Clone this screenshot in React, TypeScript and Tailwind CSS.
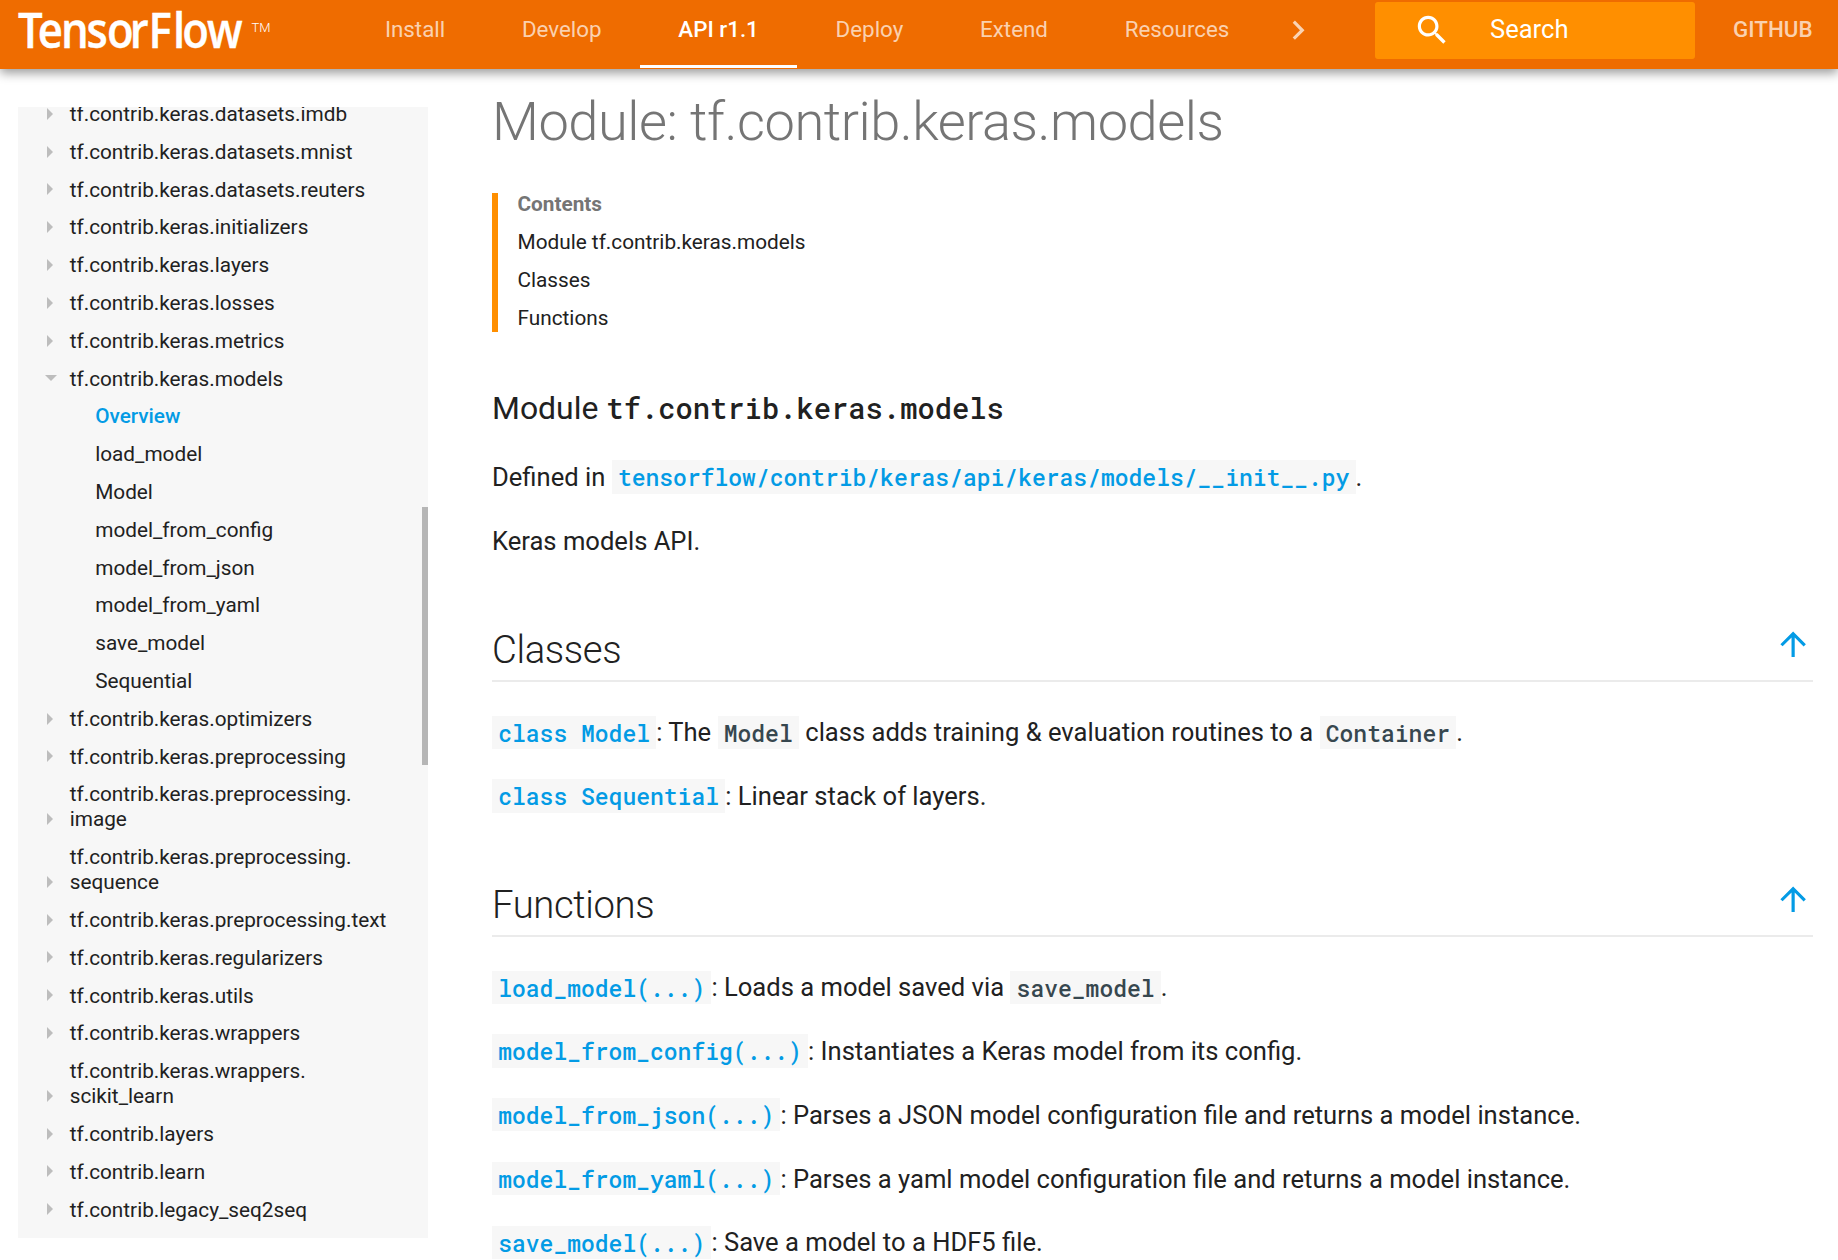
import React from 'react';

type NavRow = { lines: string[]; kind?: 'open' | 'child' | 'active' };

const SIDEBAR: NavRow[] = [
  { lines: ['tf.contrib.keras.datasets.imdb'] },
  { lines: ['tf.contrib.keras.datasets.mnist'] },
  { lines: ['tf.contrib.keras.datasets.reuters'] },
  { lines: ['tf.contrib.keras.initializers'] },
  { lines: ['tf.contrib.keras.layers'] },
  { lines: ['tf.contrib.keras.losses'] },
  { lines: ['tf.contrib.keras.metrics'] },
  { lines: ['tf.contrib.keras.models'], kind: 'open' },
  { lines: ['Overview'], kind: 'active' },
  { lines: ['load_model'], kind: 'child' },
  { lines: ['Model'], kind: 'child' },
  { lines: ['model_from_config'], kind: 'child' },
  { lines: ['model_from_json'], kind: 'child' },
  { lines: ['model_from_yaml'], kind: 'child' },
  { lines: ['save_model'], kind: 'child' },
  { lines: ['Sequential'], kind: 'child' },
  { lines: ['tf.contrib.keras.optimizers'] },
  { lines: ['tf.contrib.keras.preprocessing'] },
  { lines: ['tf.contrib.keras.preprocessing.', 'image'] },
  { lines: ['tf.contrib.keras.preprocessing.', 'sequence'] },
  { lines: ['tf.contrib.keras.preprocessing.text'] },
  { lines: ['tf.contrib.keras.regularizers'] },
  { lines: ['tf.contrib.keras.utils'] },
  { lines: ['tf.contrib.keras.wrappers'] },
  { lines: ['tf.contrib.keras.wrappers.', 'scikit_learn'] },
  { lines: ['tf.contrib.layers'] },
  { lines: ['tf.contrib.learn'] },
  { lines: ['tf.contrib.legacy_seq2seq'] },
];

const TABS = ['Install', 'Develop', 'API r1.1', 'Deploy', 'Extend', 'Resources'];

const FUNCTIONS: { name: string; text: React.ReactNode }[] = [
  { name: 'load_model(...)', text: <>: Loads a model saved via <Code>save_model</Code>.</> },
  { name: 'model_from_config(...)', text: ': Instantiates a Keras model from its config.' },
  { name: 'model_from_json(...)', text: ': Parses a JSON model configuration file and returns a model instance.' },
  { name: 'model_from_yaml(...)', text: ': Parses a yaml model configuration file and returns a model instance.' },
  { name: 'save_model(...)', text: ': Save a model to a HDF5 file.' },
];

function Code({ children, link = false }: { children: React.ReactNode; link?: boolean }) {
  return (
    <code
      className={`bg-[#f7f7f7] px-[6.2px] py-[1.6px] font-['Roboto_Mono','DejaVu_Sans_Mono',monospace] text-[23px] font-medium ${
        link ? 'text-[#039be5]' : 'text-[#37474f]'
      }`}
    >
      {children}
    </code>
  );
}

function Logo() {
  return (
    <svg width="260" height="69" viewBox="0 0 260 69" className="ml-[18px] shrink-0 overflow-visible" fill="#fff">
      <g transform="scale(0.91 1)">
        <text
          y="48"
          x="0 21.6 47.3 75.4 97.7 122.9 143.4 170.4 180.5 207.6"
          fontFamily="'Open Sans', sans-serif"
          fontWeight="600"
          fontSize="48"
          stroke="#fff"
          strokeWidth="0.4"
        >
          TensorFlow
        </text>
      </g>
      <text x="233.5" y="31.8" fontFamily="Roboto, sans-serif" fontWeight="300" fontSize="13">
        TM
      </text>
    </svg>
  );
}

function Header() {
  return (
    <header className="relative z-10 flex h-[69px] bg-[#ef6c00] text-[22.35px] text-white shadow-[0_4px_10px_rgba(0,0,0,0.4)]">
      <Logo />
      <nav className="ml-[68.5px] flex h-[68px]">
        {TABS.map((tab) => (
          <a
            key={tab}
            className={`border-b-[3px] px-[38.4px] pt-[10px] leading-[38px] ${
              tab === 'API r1.1' ? 'border-white font-medium' : 'border-transparent text-white/70'
            }`}
          >
            {tab}
          </a>
        ))}
      </nav>
      <svg className="mt-[11px] ml-[11px] h-[38.25px] w-[38.25px] shrink-0 fill-white/70" viewBox="0 0 24 24">
        <path d="M10 6L8.59 7.41 13.17 12l-4.58 4.59L10 18l6-6z" />
      </svg>
      <div className="absolute top-[2px] right-[143px] flex h-[57px] w-[320px] items-center rounded-[3px] bg-[#ff8f00] pl-[38.25px] text-[25.55px]">
        <svg className="-mt-[1px] h-[38.25px] w-[38.25px] fill-white" viewBox="0 0 24 24">
          <path d="M15.5 14h-.79l-.28-.27C15.41 12.59 16 11.11 16 9.5 16 5.91 13.09 3 9.5 3S3 5.91 3 9.5 5.91 16 9.5 16c1.61 0 3.09-.59 4.23-1.57l.27.28v.79l5 4.99L20.49 19l-4.99-5zm-6 0C7.01 14 5 11.99 5 9.5S7.01 5 9.5 5 14 7.01 14 9.5 11.99 14 9.5 14z" />
        </svg>
        <span className="-mt-[2px] ml-[38.5px]">Search</span>
      </div>
      <a className="mr-[25.5px] ml-auto pt-[10px] leading-[38px] font-medium text-white/70">GITHUB</a>
    </header>
  );
}

function Sidebar() {
  return (
    <aside className="relative ml-[18px] h-[1131px] w-[410px] shrink-0 overflow-hidden bg-[#f7f7f7] text-[20.75px] leading-[25px]">
      <ul className="-mt-[5px]">
        {SIDEBAR.map((row, i) => {
          const top = !row.kind || row.kind === 'open';
          return (
            <li key={i} className={`flex items-end pb-[12.8px] ${top ? '' : 'pl-[25.5px]'}`}>
              <span className="flex h-[25px] w-[51.7px] shrink-0 items-center pb-[1.5px]">
                {!row.kind && (
                  <svg className="ml-[29px] h-3 w-1.5 fill-[#bdbdbd]" viewBox="0 0 6 12">
                    <path d="M0 0l6 6-6 6z" />
                  </svg>
                )}
                {row.kind === 'open' && (
                  <svg className="ml-[26.5px] h-1.5 w-3 fill-[#bdbdbd]" viewBox="0 0 12 6">
                    <path d="M0 0h12L6 6z" />
                  </svg>
                )}
              </span>
              <span className={row.kind === 'active' ? 'font-medium text-[#039be5]' : ''}>
                {row.lines.map((l) => (
                  <span key={l} className="block">
                    {l}
                  </span>
                ))}
              </span>
            </li>
          );
        })}
      </ul>
      <div className="absolute top-[400px] right-0 h-[258px] w-[6px] bg-[#b6b6b6]" />
    </aside>
  );
}

function SectionTitle({ children }: { children: React.ReactNode }) {
  return (
    <div className="mt-[64px] mb-[31px] flex h-[58px] items-start justify-between border-b-2 border-[#ebebeb]">
      <h2 className="pt-[0.5px] text-[38.25px] leading-[51px] font-light tracking-[-0.01em]">{children}</h2>
      <svg className="mt-[0.5px] mr-[1px] h-[38.25px] w-[38.25px] fill-[#039be5]" viewBox="0 0 24 24">
        <path d="M4 12l1.41 1.41L11 7.83V20h2V7.83l5.58 5.59L20 12l-8-8-8 8z" />
      </svg>
    </div>
  );
}

export default function App() {
  return (
    <div className="flex h-[1260px] w-[1838px] flex-col overflow-hidden bg-white font-['Roboto',sans-serif] text-[#212121]">
      <Header />
      <div className="flex pt-[38px]">
        <Sidebar />
        <main className="-mt-[17px] ml-[64px] w-[1321px] text-[25.58px] leading-[38.25px]">
          <h1 className="text-[54.2px] leading-[63.75px] font-light tracking-[-0.0088em] text-[#757575]">
            Module: tf.contrib.keras.models
          </h1>
          <nav className="mt-[39.25px] flex h-[139px] border-l-[6px] border-[#ff8f00] pl-[19.5px] text-[20.77px] leading-[37.9px]">
            <ul className="-mt-[7px]">
              <li className="font-bold text-[#757575]">Contents</li>
              <li>Module tf.contrib.keras.models</li>
              <li>Classes</li>
              <li>Functions</li>
            </ul>
          </nav>
          <h3 className="mt-[51px] text-[31.95px] leading-[51px]">
            Module{' '}
            <code className="font-['Roboto_Mono','DejaVu_Sans_Mono',monospace] text-[28.8px] font-medium">
              tf.contrib.keras.models
            </code>
          </h3>
          <p className="mt-[24px]">
            Defined in <Code link>tensorflow/contrib/keras/api/keras/models/__init__.py</Code>.
          </p>
          <p className="mt-[25.75px]">Keras models API.</p>
          <SectionTitle>Classes</SectionTitle>
          <p>
            <Code link>class Model</Code>: The <Code>Model</Code> class adds training &amp; evaluation routines to a{' '}
            <Code>Container</Code>.
          </p>
          <p className="mt-[25.5px]">
            <Code link>class Sequential</Code>: Linear stack of layers.
          </p>
          <SectionTitle>Functions</SectionTitle>
          <div className="flex flex-col gap-[25.5px]">
            {FUNCTIONS.map((f) => (
              <p key={f.name}>
                <Code link>{f.name}</Code>
                {f.text}
              </p>
            ))}
          </div>
        </main>
      </div>
    </div>
  );
}
